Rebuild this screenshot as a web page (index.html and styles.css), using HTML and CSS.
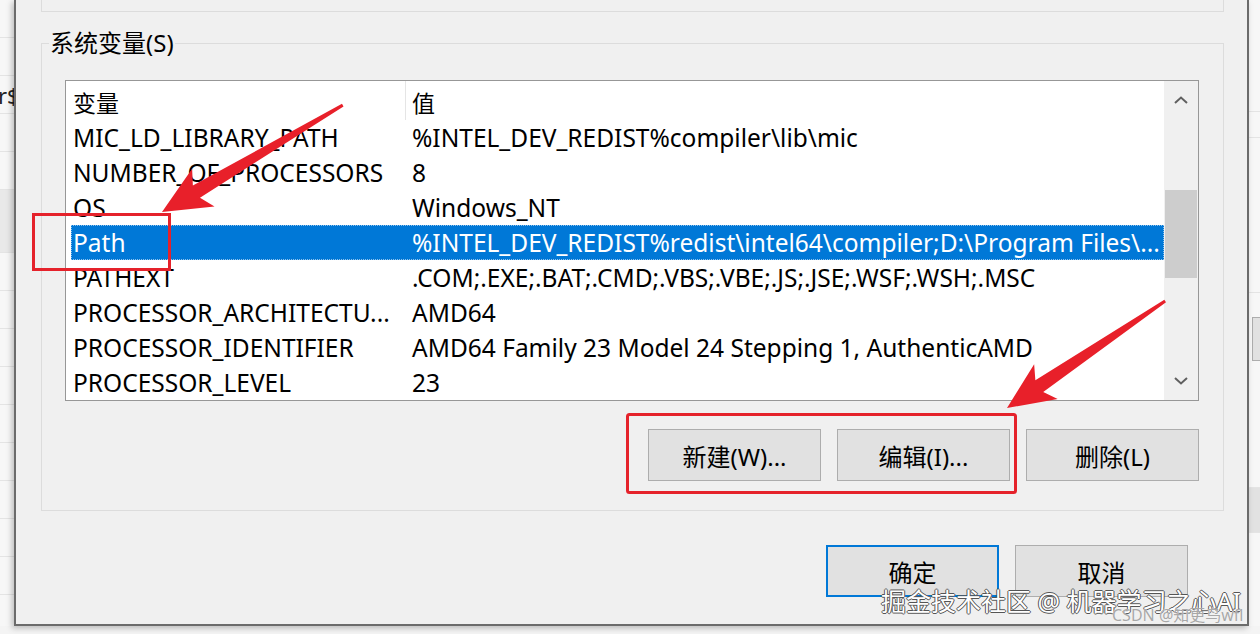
FILE: index.html
```html
<!DOCTYPE html>
<html lang="zh-CN">
<head>
    <meta charset="UTF-8">
    <meta name="viewport" content="width=device-width, initial-scale=1.0">
    <title>系统变量</title>
    <link rel="stylesheet" href="styles.css">
</head>
<body>
    <div class="desk">
        <div class="bg-left">
            <div class="bg-row"></div>
            <div class="bg-row"></div>
            <div class="bg-row"><span class="bg-text">r$</span></div>
            <div class="bg-row"></div>
            <div class="bg-row"></div>
            <div class="bg-row sel"></div>
            <div class="bg-row"></div>
            <div class="bg-row"></div>
            <div class="bg-row"></div>
            <div class="bg-row"></div>
            <div class="bg-row"></div>
            <div class="bg-row"></div>
            <div class="bg-row"></div>
            <div class="bg-row"></div>
            <div class="bg-row"></div>
            <div class="bg-row"></div>
        </div>

        <div class="dialog">
            <div class="group-top"></div>

            <fieldset class="group">
                <legend>系统变量(S)</legend>
                <div class="list">
                    <div class="table">
                        <div class="row head">
                            <div class="cell name">变量</div>
                            <div class="cell value">值</div>
                        </div>
                        <div class="row">
                            <div class="cell name">MIC_LD_LIBRARY_PATH</div>
                            <div class="cell value">%INTEL_DEV_REDIST%compiler\lib\mic</div>
                        </div>
                        <div class="row">
                            <div class="cell name">NUMBER_OF_PROCESSORS</div>
                            <div class="cell value">8</div>
                        </div>
                        <div class="row">
                            <div class="cell name">OS</div>
                            <div class="cell value">Windows_NT</div>
                        </div>
                        <div class="row selected">
                            <div class="cell name">Path</div>
                            <div class="cell value">%INTEL_DEV_REDIST%redist\intel64\compiler;D:\Program Files\...</div>
                        </div>
                        <div class="row">
                            <div class="cell name">PATHEXT</div>
                            <div class="cell value">.COM;.EXE;.BAT;.CMD;.VBS;.VBE;.JS;.JSE;.WSF;.WSH;.MSC</div>
                        </div>
                        <div class="row">
                            <div class="cell name">PROCESSOR_ARCHITECTU...</div>
                            <div class="cell value">AMD64</div>
                        </div>
                        <div class="row">
                            <div class="cell name">PROCESSOR_IDENTIFIER</div>
                            <div class="cell value">AMD64 Family 23 Model 24 Stepping 1, AuthenticAMD</div>
                        </div>
                        <div class="row">
                            <div class="cell name">PROCESSOR_LEVEL</div>
                            <div class="cell value">23</div>
                        </div>
                    </div>
                    <div class="scrollbar">
                        <div class="sb-btn">
                            <svg width="14" height="8" viewBox="0 0 14 8"><path d="M1 7 L7 1.5 L13 7" fill="none" stroke="#606060" stroke-width="2"/></svg>
                        </div>
                        <div class="sb-track"><div class="sb-thumb"></div></div>
                        <div class="sb-btn">
                            <svg width="14" height="8" viewBox="0 0 14 8"><path d="M1 1 L7 6.5 L13 1" fill="none" stroke="#606060" stroke-width="2"/></svg>
                        </div>
                    </div>
                </div>
                <div class="actions">
                    <button class="btn">新建(W)...</button>
                    <button class="btn">编辑(I)...</button>
                    <button class="btn">删除(L)</button>
                </div>
            </fieldset>

            <div class="footer">
                <button class="btn default">确定</button>
                <button class="btn">取消</button>
            </div>
        </div>

        <div class="bg-right">
            <div class="bg-row tall"></div>
            <div class="bg-row short"></div>
            <div class="bg-row mid"></div>
            <div class="bg-btn"></div>
            <div class="bg-row low"></div>
            <div class="bg-row dark"></div>
        </div>
    </div>
    <div class="bg-bottom"></div>

    <!-- red annotations drawn over the screenshot -->
    <svg class="marks" width="1260" height="634" viewBox="0 0 1260 634">
        <rect x="33.5" y="214.5" width="136" height="55" fill="none" stroke="#e5222b" stroke-width="3"/>
        <rect x="627.5" y="414.5" width="388" height="78" rx="2" fill="none" stroke="#e5222b" stroke-width="3"/>
        <polygon transform="translate(162 212) rotate(-30.6)" points="0,0 48,-22 40,-7 210,-1.5 210,1.5 40,7 48,22" fill="#e8202a"/>
        <polygon transform="translate(1007 408) rotate(-34.1)" points="0,0 47,-21 39,-7 191,-1.5 191,1.5 39,7 47,21" fill="#e8202a"/>
    </svg>

    <div class="watermark">
        <div class="wm-main">掘金技术社区 @ 机器学习之心AI</div>
        <div class="wm-sub">CSDN @知更鸟wfl</div>
    </div>
</body>
</html>
```

FILE: styles.css
```css
body {
    margin: 0;
    padding: 0;
    width: 1260px;
    height: 634px;
    overflow: hidden;
    background-color: #f7f7f7;
    font-family: "Noto Sans", "Noto Sans CJK SC", sans-serif;
    color: #000;
    position: relative;
}
.desk {
    display: flex;
    height: 626px;
}

/* window behind the dialog */
.bg-left {
    width: 14px;
    flex: none;
    overflow: hidden;
    display: flex;
    flex-direction: column;
}
.bg-row {
    height: 37px;
    flex: none;
    border-bottom: 1px solid #e4e4e4;
    position: relative;
}
.bg-row.sel {
    background-color: #e9e9e9;
    height: 62px;
}
.bg-text {
    position: absolute;
    left: -2px;
    top: 4px;
    font-size: 22px;
    color: #222;
}
.bg-right {
    width: 11px;
    flex: none;
    display: flex;
    flex-direction: column;
}
.bg-row.tall { height: 111px; }
.bg-row.short { height: 25px; }
.bg-row.mid { height: 154px; }
.bg-row.low { height: 70px; margin-top: 56px; }
.bg-row.dark { height: 44px; background-color: #e2e2e2; }
.bg-btn {
    margin: 24px 0 0 3px;
    height: 42px;
    border: 1px solid #adadad;
    border-right: none;
    background-color: #e1e1e1;
}
.bg-bottom {
    height: 8px;
    background-color: #f4f4f4;
}

/* dialog */
.dialog {
    width: 1235px;
    height: 626px;
    flex: none;
    box-sizing: border-box;
    background-color: #f0f0f0;
    border: 2px solid #6b6b6b;
    border-top: none;
    padding: 0 23px 0 25px;
    box-shadow: -2px 2px 6px rgba(0, 0, 0, 0.25);
    position: relative;
    z-index: 1;
}
.group-top {
    height: 11px;
    border: 1px solid #dcdcdc;
    border-top: none;
}
.group {
    margin: 16px 0 0 0;
    padding: 22px 24px 29px 23px;
    border: 1px solid #dcdcdc;
    min-width: 0;
}
.group legend {
    font-size: 24px;
    line-height: 30px;
    padding: 0 1px;
    margin-left: -16px;
}

/* list view */
.list {
    display: flex;
    height: 321px;
    box-sizing: border-box;
    border: 1px solid #979797;
    background-color: #fff;
    overflow: hidden;
}
.table {
    flex: 1;
    padding-left: 5px;
    overflow: hidden;
}
.row {
    display: grid;
    grid-template-columns: 335px 1fr;
    height: 35px;
    align-items: center;
    font-size: 24.5px;
    white-space: nowrap;
}
.row.head {
    height: 39px;
    align-items: stretch;
    font-size: 23px;
}
.row.head .cell {
    display: flex;
    align-items: center;
    padding-top: 3px;
}
.row.head .name {
    border-right: 1px solid #e5e5e5;
}
.cell {
    overflow: hidden;
}
.name {
    padding-left: 2px;
}
.value {
    padding-left: 6px;
}
.row.selected {
    background-color: #0078d7;
    color: #fff;
    outline: 1px dotted #8fc2ec;
    outline-offset: -1px;
}

.scrollbar {
    width: 34px;
    flex: none;
    display: flex;
    flex-direction: column;
    background-color: #f0f0f0;
}
.sb-btn {
    height: 38px;
    display: flex;
    align-items: center;
    justify-content: center;
}
.sb-track {
    flex: 1;
}
.sb-thumb {
    margin: 71px 1px 0 1px;
    height: 88px;
    background-color: #cdcdcd;
}

/* buttons */
.actions, .footer {
    display: flex;
    justify-content: flex-end;
    gap: 16px;
}
.actions {
    margin-top: 28px;
}
.footer {
    margin-top: 34px;
    padding-right: 36px;
}
.btn {
    width: 173px;
    height: 52px;
    box-sizing: border-box;
    border: 1px solid #adadad;
    background-color: #e1e1e1;
    font-family: "Noto Sans", "Noto Sans CJK SC", sans-serif;
    font-size: 24px;
    color: #000;
    padding: 0;
}
.btn.default {
    border: 2px solid #0078d7;
}

/* overlays */
.marks {
    position: absolute;
    top: 0;
    left: 0;
    z-index: 2;
    pointer-events: none;
}
.watermark {
    position: absolute;
    left: 881px;
    top: 584px;
    z-index: 3;
    white-space: nowrap;
}
.wm-main {
    font-size: 25px;
    line-height: 34px;
    color: #fff;
    text-shadow: 1px 0 0 #555, -1px 0 0 #555, 0 1px 0 #555, 0 -1px 0 #555;
}
.wm-sub {
    margin: -13px 0 0 231px;
    font-size: 16px;
    line-height: 20px;
    color: #a8a8a8;
    text-shadow: 0 0 1px #fff;
}
```
